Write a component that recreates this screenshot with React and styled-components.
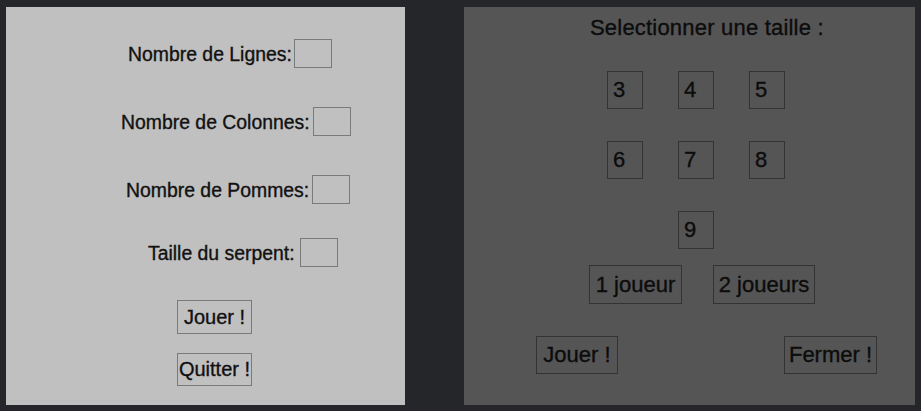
import React from "react";
import styled, { createGlobalStyle } from "styled-components";

const Global = createGlobalStyle`
  html, body { margin: 0; padding: 0; background: #25262a; }
  body { font-family: "Liberation Sans", Arial, sans-serif; }
  * { box-sizing: border-box; }
`;

const Screen = styled.div`
  width: 921px;
  height: 411px;
  display: flex;
  padding: 7px 6px 6px 6px;
  gap: 59px;
  background: #25262a;
`;

const LeftPanel = styled.div`
  width: 399px;
  height: 398px;
  background: #c0c0c0;
  display: flex;
  flex-direction: column;
  padding-top: 32px;
  color: #111111;
  font-size: 19.4px;
  -webkit-text-stroke: 0.35px #111111;
`;

const FieldRow = styled.div`
  display: flex;
  align-items: center;
  gap: ${(p) => p.$gap}px;
  height: 29px;
  padding-left: ${(p) => p.$indent}px;
  margin-top: ${(p) => p.$top}px;
`;

const Label = styled.span`
  line-height: 22px;
  white-space: nowrap;
`;

const Field = styled.div`
  width: 38px;
  height: 29px;
  border: 1px solid #7a7a7a;
  background: #c0c0c0;
`;

const LightButton = styled.div`
  width: 75px;
  height: ${(p) => p.$h}px;
  margin-left: 171px;
  margin-top: ${(p) => p.$top}px;
  border: 1px solid #7a7a7a;
  display: flex;
  align-items: center;
  justify-content: center;
  font-size: 20px;
  white-space: nowrap;
`;

const RightPanel = styled.div`
  width: 451px;
  height: 398px;
  background: #555555;
  display: flex;
  flex-direction: column;
  padding-top: 8px;
  color: #0c0c0c;
  font-size: 22px;
  -webkit-text-stroke: 0.35px #0c0c0c;
`;

const Title = styled.div`
  line-height: 25px;
  padding-left: 126px;
  letter-spacing: 0.2px;
  white-space: nowrap;
`;

const SizeGrid = styled.div`
  display: grid;
  grid-template-columns: repeat(3, 36px);
  column-gap: 35px;
  row-gap: 32px;
  margin-left: 143px;
  margin-top: 31px;
`;

const SizeBox = styled.div`
  width: 36px;
  height: 38px;
  border: 1px solid #333333;
  display: flex;
  align-items: center;
  padding-left: 5px;
  padding-bottom: 1px;
  grid-column: ${(p) => p.$col || "auto"};
`;

const PlayerRow = styled.div`
  display: flex;
  gap: 31px;
  margin-left: 125px;
  margin-top: 16px;
`;

const DarkButton = styled.div`
  width: ${(p) => p.$w}px;
  height: ${(p) => p.$h}px;
  border: 1px solid #333333;
  display: flex;
  align-items: center;
  justify-content: center;
  white-space: nowrap;
`;

const BottomRow = styled.div`
  display: flex;
  justify-content: space-between;
  padding: 0 38px 0 72px;
  margin-top: 32px;
`;

const fields = [
  { label: "Nombre de Lignes:", indent: 122, gap: 2, top: 0 },
  { label: "Nombre de Colonnes:", indent: 115, gap: 3, top: 39 },
  { label: "Nombre de Pommes:", indent: 120, gap: 3, top: 39 },
  { label: "Taille du serpent:", indent: 142, gap: 5, top: 34 },
];

export default function App() {
  return (
    <>
      <Global />
      <Screen>
        <LeftPanel>
          {fields.map((f) => (
            <FieldRow key={f.label} $indent={f.indent} $gap={f.gap} $top={f.top}>
              <Label>{f.label}</Label>
              <Field />
            </FieldRow>
          ))}
          <LightButton $h={34} $top={33}>Jouer !</LightButton>
          <LightButton $h={33} $top={19}>Quitter !</LightButton>
        </LeftPanel>
        <RightPanel>
          <Title>Selectionner une taille :</Title>
          <SizeGrid>
            {["3", "4", "5", "6", "7", "8"].map((n) => (
              <SizeBox key={n}>{n}</SizeBox>
            ))}
            <SizeBox $col={2}>9</SizeBox>
          </SizeGrid>
          <PlayerRow>
            <DarkButton $w={93} $h={39}>1 joueur</DarkButton>
            <DarkButton $w={102} $h={39}>2 joueurs</DarkButton>
          </PlayerRow>
          <BottomRow>
            <DarkButton $w={82} $h={38}>Jouer !</DarkButton>
            <DarkButton $w={93} $h={38}>Fermer !</DarkButton>
          </BottomRow>
        </RightPanel>
      </Screen>
    </>
  );
}
